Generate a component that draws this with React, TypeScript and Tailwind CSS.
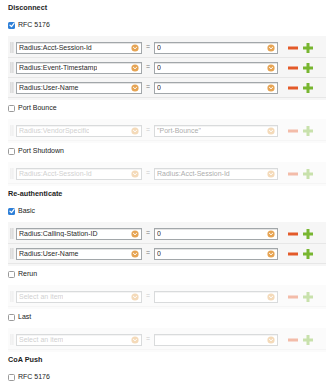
import React from "react";

const font = { fontFamily: '"Liberation Sans", Arial, sans-serif' };

function Heading({ children }: { children: React.ReactNode }) {
  return (
    <div className="flex h-[17px] items-center pl-2 text-[7.25px] font-bold text-[#1e1e1e]">
      {children}
    </div>
  );
}

function Check({ checked, label }: { checked?: boolean; label: string }) {
  return (
    <div className="flex h-4 items-center gap-[3px] pl-2 text-[7px] text-[#222]">
      {checked ? (
        <span className="flex h-[7px] w-[7px] items-center justify-center rounded-[1.5px] bg-[#2f80d8]">
          <svg width="6" height="6" viewBox="0 0 6 6">
            <path d="M1 3.2 L2.5 4.6 L5 1.4" fill="none" stroke="#fff" strokeWidth="1.2" strokeLinecap="round" strokeLinejoin="round" />
          </svg>
        </span>
      ) : (
        <span className="h-[7px] w-[7px] rounded-[1.5px] border border-[#9a9a9a] bg-white" />
      )}
      <span>{label}</span>
    </div>
  );
}

function Grip() {
  return (
    <svg width="4" height="11" viewBox="0 0 4 11" className="shrink-0">
      {Array.from({ length: 6 }).map((_, i) => (
        <React.Fragment key={i}>
          <rect x="0" y={i * 2 - 0.5} width="1" height="1" fill="#c4c4c4" />
          <rect x="2" y={i * 2 - 0.5} width="1" height="1" fill="#c4c4c4" />
          <rect x="1" y={i * 2 + 0.5} width="1" height="1" fill="#d4d4d4" />
          <rect x="3" y={i * 2 + 0.5} width="1" height="1" fill="#d4d4d4" />
        </React.Fragment>
      ))}
    </svg>
  );
}

function Drop() {
  return (
    <svg width="8" height="8" viewBox="0 0 8 8" className="shrink-0">
      <circle cx="4" cy="4" r="3.6" fill="#e6a453" />
      <path d="M2.4 3.3 L4 4.8 L5.6 3.3" fill="none" stroke="#fff" strokeWidth="1" strokeLinecap="round" strokeLinejoin="round" />
    </svg>
  );
}

function Select({ text, width, placeholder }: { text: string; width: string; placeholder?: boolean }) {
  return (
    <div
      className={`flex h-[12px] shrink-0 items-center justify-between border border-[#a2a7aa] bg-white pl-[2px] pr-[2px] shadow-[inset_0_1px_0_#e4e4e4] ${width}`}
    >
      <span className={`truncate text-[7px] leading-none ${placeholder ? "text-[#8a8a8a]" : "text-[#2a2a2a]"}`}>{text}</span>
      <Drop />
    </div>
  );
}

function Minus() {
  return (
    <svg width="10" height="10" viewBox="0 0 10 10" className="ml-[10px] shrink-0">
      <rect x="0" y="3.5" width="10" height="3" fill="#e35a2a" />
    </svg>
  );
}

function Plus() {
  return (
    <svg width="10" height="10" viewBox="0 0 10 10" className="ml-[5px] shrink-0">
      <rect x="0" y="3.5" width="10" height="3" fill="#78b631" />
      <rect x="3.5" y="0" width="3" height="10" fill="#78b631" />
    </svg>
  );
}

function Row({ left, right, leftPh, rightPh }: { left: string; right: string; leftPh?: boolean; rightPh?: boolean }) {
  return (
    <div className="flex h-5 items-center border-b border-[#e7e7e7] pl-[2px]">
      <Grip />
      <div className="ml-[2px]">
        <Select text={left} width="w-[126px]" placeholder={leftPh} />
      </div>
      <span className="w-3 text-center text-[7px] text-[#777]">=</span>
      <Select text={right} width="w-[124px]" placeholder={rightPh} />
      <Minus />
      <Plus />
    </div>
  );
}

function Rows({ children, faded }: { children: React.ReactNode; faded?: boolean }) {
  return (
    <div className={`ml-2 mr-[5px] mt-[3px] bg-[#f6f6f6] py-[2px] ${faded ? "opacity-40" : ""}`}>{children}</div>
  );
}

export default function App() {
  return (
    <div className="h-[384px] w-[331px] overflow-hidden bg-white" style={font}>
      <Heading>Disconnect</Heading>
      <Check checked label="RFC 5176" />
      <Rows>
        <Row left="Radius:Acct-Session-Id" right="0" />
        <Row left="Radius:Event-Timestamp" right="0" />
        <Row left="Radius:User-Name" right="0" />
      </Rows>
      <Check label="Port Bounce" />
      <Rows faded>
        <Row left="Radius:VendorSpecific" right={'"Port-Bounce"'} leftPh />
      </Rows>
      <Check label="Port Shutdown" />
      <Rows faded>
        <Row left="Radius:Acct-Session-Id" right="Radius:Acct-Session-Id" leftPh />
      </Rows>
      <Heading>Re-authenticate</Heading>
      <Check checked label="Basic" />
      <Rows>
        <Row left="Radius:Calling-Station-ID" right="0" />
        <Row left="Radius:User-Name" right="0" />
      </Rows>
      <Check label="Rerun" />
      <Rows faded>
        <Row left="Select an item" right="" leftPh />
      </Rows>
      <Check label="Last" />
      <Rows faded>
        <Row left="Select an item" right="" leftPh />
      </Rows>
      <Heading>CoA Push</Heading>
      <Check label="RFC 5176" />
    </div>
  );
}
